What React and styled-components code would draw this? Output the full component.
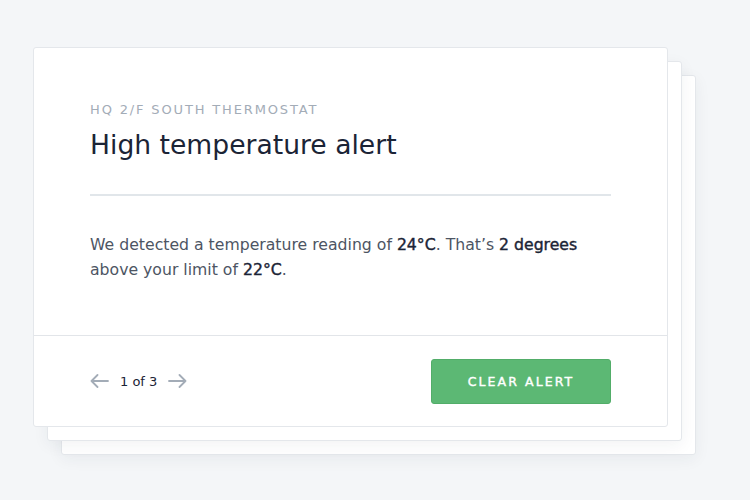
import styled, { createGlobalStyle } from 'styled-components';

const Global = createGlobalStyle`
  html, body {
    margin: 0;
    padding: 0;
    background: #f4f6f8;
    font-family: "DejaVu Sans", "Open Sans", sans-serif;
  }
`;

const Page = styled.div`
  width: 750px;
  height: 500px;
  padding: 47px 0 0 33px;
  box-sizing: border-box;
`;

const Stack = styled.div`
  position: relative;
  width: 635px;
  height: 380px;
`;

const BackCard = styled.div`
  position: absolute;
  left: ${p => p.offset}px;
  top: ${p => p.offset}px;
  width: 635px;
  height: 380px;
  box-sizing: border-box;
  background: #fff;
  border: 1px solid #e4e7eb;
  border-radius: 3px;
  box-shadow: 0 4px 16px rgba(30, 45, 70, 0.06);
`;

const Card = styled.div`
  position: relative;
  width: 635px;
  height: 380px;
  box-sizing: border-box;
  background: #fff;
  border: 1px solid #e4e7eb;
  border-radius: 3px;
  display: flex;
  flex-direction: column;
`;

const Body = styled.div`
  height: 288px;
  box-sizing: border-box;
  padding: 54px 56px 0 56px;
  border-bottom: 1px solid #e2e5e9;
`;

const Label = styled.div`
  font-size: 13px;
  letter-spacing: 1.85px;
  color: #a3acb7;
  line-height: 16px;
`;

const Title = styled.h1`
  margin: 10px 0 0;
  font-size: 26.6px;
  font-weight: 400;
  color: #1b2436;
  line-height: 34px;
`;

const Rule = styled.div`
  margin-top: 32px;
  height: 2px;
  background: #e1e6ea;
`;

const Text = styled.p`
  margin: 36px 0 0;
  font-size: 15.7px;
  line-height: 25px;
  color: #4d5563;

  b {
    font-weight: 400;
    color: #1b2436;
    -webkit-text-stroke: 0.4px #1b2436;
  }
`;

const Footer = styled.div`
  flex: 1;
  display: flex;
  align-items: center;
  justify-content: space-between;
  padding: 0 56px;
`;

const Pager = styled.div`
  display: flex;
  align-items: center;
  gap: 11px;
  font-size: 13px;
  color: #1b2436;
`;

const Arrow = styled.svg`
  width: 19px;
  height: 14px;
  display: block;
`;

const Button = styled.button`
  width: 180px;
  height: 45px;
  border: 1px solid #52ad69;
  border-radius: 3px;
  background: #5cb874;
  color: #fff;
  font-family: inherit;
  font-size: 12.5px;
  font-weight: 400;
  -webkit-text-stroke: 0.4px #fff;
  letter-spacing: 2.1px;
  cursor: pointer;
`;

const ArrowIcon = ({ dir }) => (
  <Arrow viewBox="0 0 19 14" fill="none" stroke="#a3acb7" strokeWidth="1.8" strokeLinecap="round" strokeLinejoin="round">
    {dir === 'left' ? (
      <path d="M18 7H1.5M7.5 1L1.5 7l6 6" />
    ) : (
      <path d="M1 7h16.5M11.5 1l6 6-6 6" />
    )}
  </Arrow>
);

export default function App() {
  return (
    <Page>
      <Global />
      <Stack>
        <BackCard offset={28} />
        <BackCard offset={14} />
        <Card>
          <Body>
            <Label>HQ 2/F SOUTH THERMOSTAT</Label>
            <Title>High temperature alert</Title>
            <Rule />
            <Text>
              We detected a temperature reading of <b>24°C</b>. That’s <b>2 degrees</b>
              <br />
              above your limit of <b>22°C</b>.
            </Text>
          </Body>
          <Footer>
            <Pager>
              <ArrowIcon dir="left" />
              <span>1 of 3</span>
              <ArrowIcon dir="right" />
            </Pager>
            <Button>CLEAR ALERT</Button>
          </Footer>
        </Card>
      </Stack>
    </Page>
  );
}
